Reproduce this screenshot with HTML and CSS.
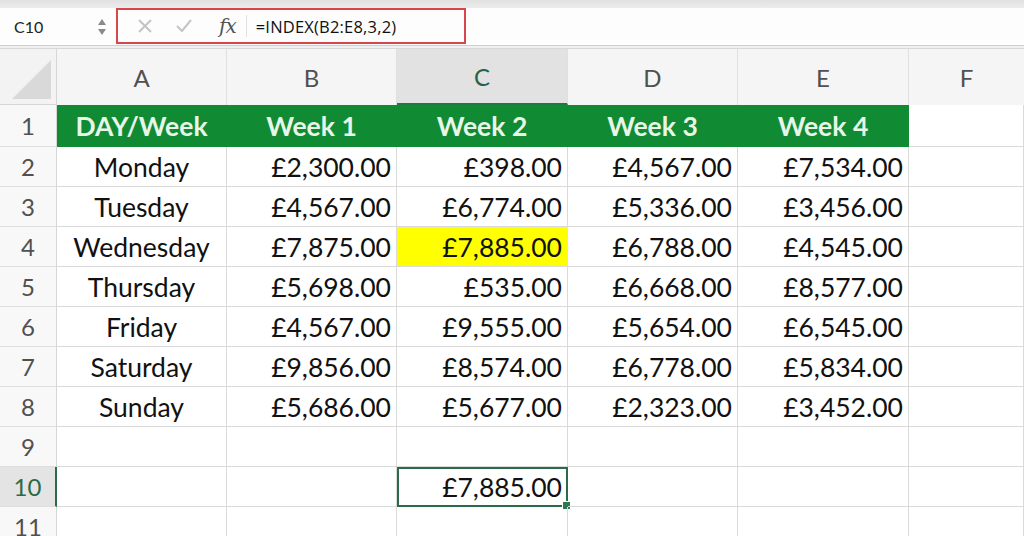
FILE: index.html
```html
<!DOCTYPE html>
<html>
<head>
<meta charset="utf-8">
<link rel="stylesheet" href="styles.css">
</head>
<body>
<div class="topstrip"></div>
<div class="fbar">
  <div class="namebox">
    <span class="nb-text">C10</span>
    <span class="nb-arrows"><svg width="10" height="18" viewBox="0 0 10 18"><path d="M1 7 L5 1 L9 7 Z" fill="#8a8a8a"/><path d="M1 11 L5 17 L9 11 Z" fill="#8a8a8a"/></svg></span>
  </div>
  <div class="formula">
    <span class="ficon x"><svg width="16" height="16" viewBox="0 0 16 16"><path d="M2 2 L14 14 M14 2 L2 14" stroke="#c4c4c4" stroke-width="2" fill="none"/></svg></span>
    <span class="ficon ok"><svg width="18" height="16" viewBox="0 0 18 16"><path d="M2 8 L7 13 L16 2" stroke="#c4c4c4" stroke-width="2" fill="none"/></svg></span>
    <span class="fx">fx</span>
    <span class="fdiv"></span>
    <span class="ftext">=INDEX(B2:E8,3,2)</span>
  </div>
  <div class="frest"></div>
</div>
<div class="sep"></div>
<div class="sheet">
  <div class="corner"><svg width="57" height="56" viewBox="0 0 57 56"><path d="M12 50 L51 11 L51 50 Z" fill="#d9d9d9"/></svg></div>
  <div class="ch">A</div><div class="ch">B</div><div class="ch sel">C</div><div class="ch">D</div><div class="ch">E</div><div class="ch last">F</div>

  <div class="rh r1">1</div>
  <div class="c g">DAY/Week</div><div class="c g">Week 1</div><div class="c g">Week 2</div><div class="c g">Week 3</div><div class="c g">Week 4</div><div class="c r1c"></div>

  <div class="rh">2</div>
  <div class="c m">Monday</div><div class="c n">£2,300.00</div><div class="c n">£398.00</div><div class="c n">£4,567.00</div><div class="c n">£7,534.00</div><div class="c"></div>

  <div class="rh">3</div>
  <div class="c m">Tuesday</div><div class="c n">£4,567.00</div><div class="c n">£6,774.00</div><div class="c n">£5,336.00</div><div class="c n">£3,456.00</div><div class="c"></div>

  <div class="rh">4</div>
  <div class="c m">Wednesday</div><div class="c n">£7,875.00</div><div class="c n y">£7,885.00</div><div class="c n">£6,788.00</div><div class="c n">£4,545.00</div><div class="c"></div>

  <div class="rh">5</div>
  <div class="c m">Thursday</div><div class="c n">£5,698.00</div><div class="c n">£535.00</div><div class="c n">£6,668.00</div><div class="c n">£8,577.00</div><div class="c"></div>

  <div class="rh">6</div>
  <div class="c m">Friday</div><div class="c n">£4,567.00</div><div class="c n">£9,555.00</div><div class="c n">£5,654.00</div><div class="c n">£6,545.00</div><div class="c"></div>

  <div class="rh">7</div>
  <div class="c m">Saturday</div><div class="c n">£9,856.00</div><div class="c n">£8,574.00</div><div class="c n">£6,778.00</div><div class="c n">£5,834.00</div><div class="c"></div>

  <div class="rh">8</div>
  <div class="c m">Sunday</div><div class="c n">£5,686.00</div><div class="c n">£5,677.00</div><div class="c n">£2,323.00</div><div class="c n">£3,452.00</div><div class="c"></div>

  <div class="rh">9</div>
  <div class="c"></div><div class="c"></div><div class="c"></div><div class="c"></div><div class="c"></div><div class="c"></div>

  <div class="rh selr">10</div>
  <div class="c"></div><div class="c"></div><div class="c n active">£7,885.00<span class="handle"></span></div><div class="c"></div><div class="c"></div><div class="c"></div>

  <div class="rh">11</div>
  <div class="c"></div><div class="c"></div><div class="c"></div><div class="c"></div><div class="c"></div><div class="c"></div>
</div>
</body>
</html>
```
FILE: styles.css
```css
html, body {
  margin: 0;
  padding: 0;
  background: #ffffff;
  overflow: hidden;
  width: 1024px;
  height: 536px;
}
body {
  font-family: Lato, "Open Sans", sans-serif;
  color: #111;
}
.topstrip {
  height: 8px;
  background: linear-gradient(#e2e2e2, #ececec);
}
.fbar {
  height: 37px;
  display: flex;
  background: #fdfdfd;
}
.namebox {
  width: 116px;
  display: flex;
  align-items: center;
  justify-content: space-between;
  padding: 0 9px 0 14px;
  box-sizing: border-box;
  font-size: 16px;
  color: #222;
}
.nb-arrows svg { display: block; }
.formula {
  width: 350px;
  height: 36px;
  border: 2px solid #d6464d;
  box-sizing: border-box;
  display: flex;
  align-items: center;
}
.ficon { display: flex; align-items: center; }
.ficon.x { margin-left: 19px; }
.ficon.ok { margin-left: 22px; }
.fx {
  margin-left: 26px;
  font-family: "DejaVu Serif", "Liberation Serif", serif;
  font-style: italic;
  font-size: 20px;
  color: #555;
  letter-spacing: -1px;
}
.fdiv {
  width: 1px;
  height: 22px;
  background: #e2e2e2;
  margin-left: 10px;
}
.ftext {
  margin-left: 9px;
  font-family: "Open Sans", Lato, sans-serif;
  font-size: 16.5px;
  color: #111;
  letter-spacing: 0.2px;
}
.frest { flex: 1; }
.sep {
  height: 2px;
  border-top: 1px solid #cfcfcf;
  border-bottom: 1px solid #d8d8d8;
  background: #f0f0f0;
}
.sheet {
  display: grid;
  grid-template-columns: 57px 170px 170px 171px 170px 171px 1fr;
  grid-template-rows: 56px 42px repeat(10, 40px);
}
.corner {
  background: #f3f3f3;
  border-right: 1px solid #d6d6d6;
  border-bottom: 1px solid #d6d6d6;
  box-sizing: border-box;
}
.corner svg { display: block; }
.ch {
  background: #f5f5f5;
  border-right: 1px solid #e0e0e0;
  box-sizing: border-box;
  display: flex;
  align-items: center;
  justify-content: center;
  font-size: 24px;
  color: #505050;
}
.ch.sel {
  background: #e2e2e2;
  color: #2a6148;
  border-bottom: 2px solid #1c7a3d;
}
.ch.last { border-right: none; }
.rh {
  background: #f8f8f8;
  border-right: 1px solid #d6d6d6;
  border-bottom: 1px solid #dedede;
  box-sizing: border-box;
  display: flex;
  align-items: center;
  justify-content: center;
  font-size: 24px;
  color: #505050;
}
.rh.selr {
  background: #e4e4e4;
  color: #2a6a48;
  border-right: 2px solid #2b6a4a;
}
.c {
  border-right: 1px solid #dadada;
  border-bottom: 1px solid #dadada;
  box-sizing: border-box;
  display: flex;
  align-items: center;
  font-size: 26.5px;
  color: #111;
  position: relative;
  white-space: nowrap;
}
.c.g {
  background: #118a34;
  color: #e8f6e8;
  font-weight: bold;
  justify-content: center;
  border-right-color: #118a34;
  border-bottom-color: #118a34;
}
.c.m { justify-content: center; }
.c.n { justify-content: flex-end; padding-right: 5px; }
.c.y { background: #ffff00; border-right-color: #ffff00; }
.c.active {
  border: 2px solid #2b6a4a;
  padding-right: 4px;
}
.handle {
  position: absolute;
  right: -5px;
  bottom: -5px;
  width: 7px;
  height: 7px;
  background: #2b7a52;
  border: 1px solid #fff;
}
```
